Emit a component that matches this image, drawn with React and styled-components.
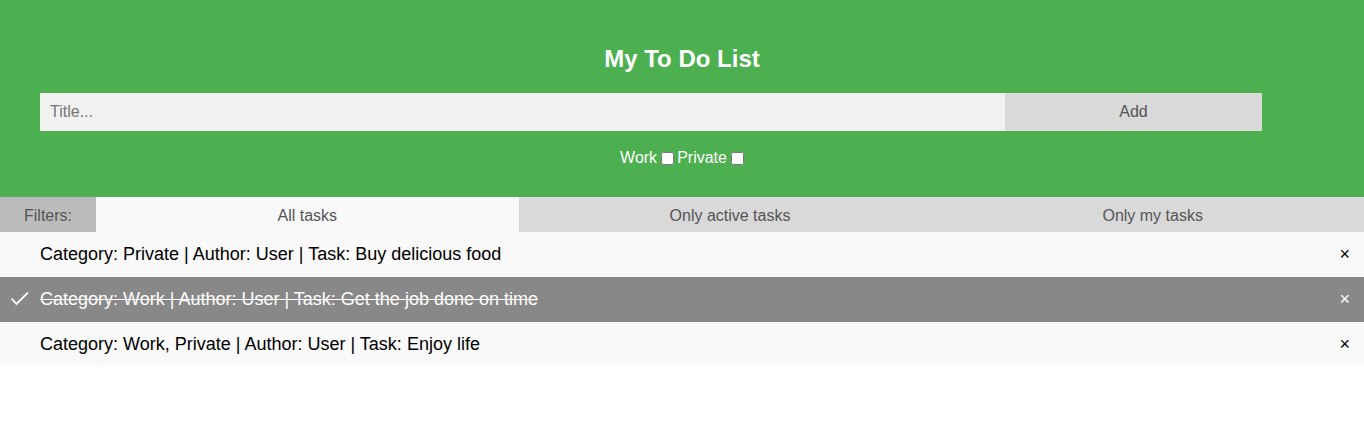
import React, { useState } from "react";
import styled, { createGlobalStyle } from "styled-components";

const GlobalStyle = createGlobalStyle`
  body {
    margin: 0;
    font-family: "Liberation Sans", Arial, sans-serif;
    background: #ffffff;
  }
  * {
    box-sizing: border-box;
  }
`;

const initialTasks = [
  { id: 1, category: "Private", author: "User", task: "Buy delicious food", done: false },
  { id: 2, category: "Work", author: "User", task: "Get the job done on time", done: true },
  { id: 3, category: "Work, Private", author: "User", task: "Enjoy life", done: false },
];

const filters = ["All tasks", "Only active tasks", "Only my tasks"];

const App = () => {
  const [tasks, setTasks] = useState(initialTasks);
  const [filter, setFilter] = useState(0);

  function toggle(id) {
    setTasks(tasks.map((t) => (t.id === id ? { ...t, done: !t.done } : t)));
  }
  function remove(id) {
    setTasks(tasks.filter((t) => t.id !== id));
  }

  return (
    <>
      <GlobalStyle />
      <Header>
        <Title>My To Do List</Title>
        <InputRow>
          <TitleInput type="text" placeholder="Title..." />
          <AddBtn>Add</AddBtn>
        </InputRow>
        <Categories>
          <label>
            Work <input type="checkbox" />
          </label>
          <label>
            Private <input type="checkbox" />
          </label>
        </Categories>
      </Header>
      <FilterBar>
        <FilterLabel>Filters:</FilterLabel>
        {filters.map((f, i) => (
          <FilterTab key={f} $active={i === filter} onClick={() => setFilter(i)}>
            {f}
          </FilterTab>
        ))}
      </FilterBar>
      <List>
        {tasks.map((t) => (
          <Item key={t.id} $done={t.done} onClick={() => toggle(t.id)}>
            {t.done && (
              <Check viewBox="0 0 20 16" width="20" height="16">
                <polyline
                  points="1.5,7.5 6.5,13 18,1.5"
                  fill="none"
                  stroke="#fff"
                  strokeWidth="1.8"
                />
              </Check>
            )}
            <span>
              Category: {t.category} | Author: {t.author} | Task: {t.task}
            </span>
            <Close
              onClick={(e) => {
                e.stopPropagation();
                remove(t.id);
              }}
            >
              {"\u00D7"}
            </Close>
          </Item>
        ))}
      </List>
    </>
  );
};

export default App;

const Header = styled.div`
  background-color: #4caf50;
  padding: 45px 40px 0 40px;
  height: 197px;
  color: white;
  text-align: center;
`;

const Title = styled.h2`
  margin: 0;
  font-size: 24px;
  line-height: 28px;
  font-weight: 700;
`;

const InputRow = styled.div`
  display: flex;
  margin-top: 20px;
  height: 38px;
`;

const TitleInput = styled.input`
  border: none;
  width: 965px;
  height: 38px;
  padding: 10px;
  font-size: 16px;
  font-family: "Liberation Sans", Arial, sans-serif;
  background: #f1f1f1;
  outline: none;
  &::placeholder {
    color: #757575;
  }
`;

const AddBtn = styled.span`
  width: 257px;
  height: 38px;
  background: #d9d9d9;
  color: #555;
  font-size: 16px;
  line-height: 38px;
  text-align: center;
  cursor: pointer;
`;

const Categories = styled.div`
  margin-top: 18px;
  font-size: 16px;
  line-height: 18px;
  display: flex;
  justify-content: center;
  gap: 3px;
  label {
    display: flex;
    align-items: center;
  }
  input {
    margin: 0 0 0 4px;
    width: 13px;
    height: 13px;
  }
`;

const FilterBar = styled.div`
  display: flex;
  height: 35px;
  background: #d9d9d9;
`;

const FilterLabel = styled.div`
  width: 96px;
  background: #bbbbbb;
  color: #555;
  font-size: 16px;
  line-height: 37px;
  text-align: center;
`;

const FilterTab = styled.div`
  flex: 1;
  background: ${(p) => (p.$active ? "#f9f9f9" : "#d9d9d9")};
  color: #555;
  font-size: 16px;
  line-height: 37px;
  height: 35px;
  text-align: center;
  cursor: pointer;
`;

const List = styled.ul`
  margin: 0;
  padding: 0;
  list-style: none;
`;

const Item = styled.li`
  position: relative;
  height: 45px;
  padding: 0 8px 0 40px;
  display: flex;
  align-items: center;
  font-size: 18px;
  cursor: pointer;
  background: ${(p) => (p.$done ? "#888888" : "#f9f9f9")};
  color: ${(p) => (p.$done ? "#fff" : "#000")};
  text-decoration: ${(p) => (p.$done ? "line-through" : "none")};
`;

const Check = styled.svg`
  position: absolute;
  left: 10px;
  top: 14px;
`;

const Close = styled.span`
  position: absolute;
  right: 0;
  top: 0;
  height: 45px;
  padding: 0 14px;
  display: flex;
  align-items: center;
  font-size: 18px;
  text-decoration: none;
  &:hover {
    background-color: #f44336;
    color: white;
  }
`;
